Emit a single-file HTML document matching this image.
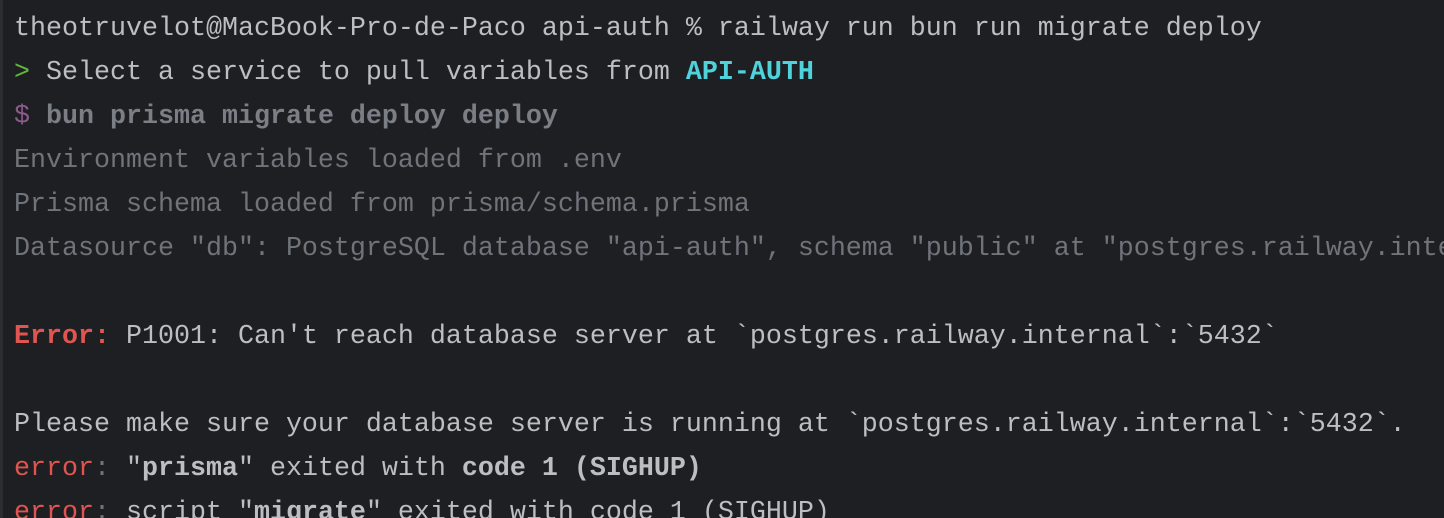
<!DOCTYPE html>
<html><head><meta charset="utf-8"><style>
html,body{margin:0;padding:0;background:#1e1f22;width:1444px;height:518px;overflow:hidden;position:relative}
.l{position:absolute;left:0;top:0;width:3px;height:518px;background:#2b2d30}
.w{position:absolute;left:0;top:0;width:1444px;height:518px;overflow:hidden}
pre{position:absolute;left:14px;top:7px;margin:0;font-family:"Liberation Mono",monospace;font-size:26.67px;line-height:44px;color:#bcbec4;white-space:pre}
.g{color:#6f737a}.gr{color:#5fb83a}.c{color:#4fd2dc;font-weight:bold}.r{color:#e0554f}.p{color:#8c5b8e}b{font-weight:bold}
.rb{color:#e0554f;font-weight:bold}.gb{color:#7a7e85;font-weight:bold}
</style></head><body><div class="w"><div class="l"></div><pre>theotruvelot@MacBook-Pro-de-Paco api-auth % railway run bun run migrate deploy
<span class="gr">&gt;</span> Select a service to pull variables from <span class="c">API-AUTH</span>
<span class="p">$</span> <span class="gb">bun prisma migrate deploy deploy</span>
<span class="g">Environment variables loaded from .env</span>
<span class="g">Prisma schema loaded from prisma/schema.prisma</span>
<span class="g">Datasource "db": PostgreSQL database "api-auth", schema "public" at "postgres.railway.inte</span>

<span class="rb">Error:</span> P1001: Can't reach database server at `postgres.railway.internal`:`5432`

Please make sure your database server is running at `postgres.railway.internal`:`5432`.
<span class="r">error</span><span class="g">:</span> "<b>prisma</b>" exited with <b>code 1 (SIGHUP)</b>
<span class="r">error</span><span class="g">:</span> script "<b>migrate</b>" exited with code 1 (SIGHUP)</pre></div></body></html>
